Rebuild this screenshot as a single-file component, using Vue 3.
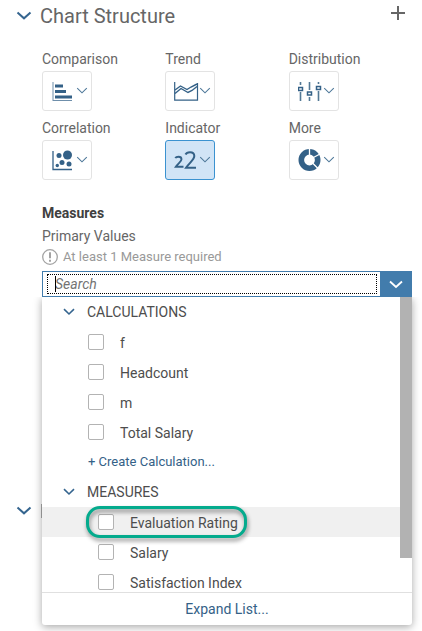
<script setup>
import { ref } from 'vue'

const chartTypes = [
  { label: 'Comparison', icon: 'bars' },
  { label: 'Trend', icon: 'trend' },
  { label: 'Distribution', icon: 'box' },
  { label: 'Correlation', icon: 'scatter' },
  { label: 'Indicator', icon: 'numeric' },
  { label: 'More', icon: 'donut' }
]
const selectedType = ref('Indicator')
const query = ref('')
const groups = ref([
  {
    title: 'CALCULATIONS',
    nested: false,
    create: true,
    items: [
      { name: 'f', checked: false },
      { name: 'Headcount', checked: false },
      { name: 'm', checked: false },
      { name: 'Total Salary', checked: false }
    ]
  },
  {
    title: 'MEASURES',
    nested: true,
    create: false,
    items: [
      { name: 'Evaluation Rating', checked: false, highlighted: true },
      { name: 'Salary', checked: false },
      { name: 'Satisfaction Index', checked: false }
    ]
  }
])
</script>

<template>
  <main class="panel">
    <header class="panel-head">
      <button class="plain toggle" type="button" aria-label="Collapse Chart Structure">
        <svg width="16" height="10" viewBox="0 0 16 10"><path d="M1.5 1.5 8 7.3 14.5 1.5" fill="none" stroke="#35658f" stroke-width="2" /></svg>
      </button>
      <h1>Chart Structure</h1>
      <button class="plain add" type="button" aria-label="Add">
        <svg width="14" height="14" viewBox="0 0 14 14"><path d="M7 0V14M0 7H14" stroke="#666" stroke-width="2" /></svg>
      </button>
    </header>

    <section class="types">
      <div v-for="t in chartTypes" :key="t.label" class="type">
        <span :id="'type-' + t.icon" class="type-label">{{ t.label }}</span>
        <button
          type="button"
          class="type-button"
          :class="{ selected: t.label === selectedType }"
          :aria-labelledby="'type-' + t.icon"
          @click="selectedType = t.label"
        >
          <svg class="type-icon" width="25" height="24" viewBox="0 0 25 24" fill="none" stroke="#346187">
            <template v-if="t.icon === 'bars'">
              <path d="M2 3V22" stroke="#6f8fab" />
              <path d="M4 7H12M4 12.5H15M4 18H21" stroke-width="3" />
              <path d="M2 21.5H21" stroke="#6f8fab" />
            </template>
            <template v-else-if="t.icon === 'trend'">
              <path d="M.7 3V21.2H23.5V4" stroke-width="1.2" />
              <path d="M1 11 6.500 7 13 10.500 17 8 23 5M1 14.500 7 9.5 14 13.5 18 11.500 23 7.500" stroke-width="1.4" />
            </template>
            <template v-else-if="t.icon === 'box'">
              <path d="M2.5 3V6M2.5 13V22M11.5 3V11M11.500 18V22M20.500 3V5M20.500 12V22" stroke-width="1.6" stroke="#527895" />
              <path d="M.500 8.500H4.500V11.500H.500ZM9.500 13H13.500V16H9.500ZM18.500 7.500H22.500V10.500H18.500Z" stroke-width="1.500" />
            </template>
            <template v-else-if="t.icon === 'scatter'">
              <path d="M2 3V21.500H21" stroke-width="1.300" />
              <g fill="#346187" stroke="none">
                <circle cx="8" cy="7.500" r="2.500" />
                <circle cx="16.500" cy="7" r="4.500" />
                <circle cx="11" cy="14.500" r="2.500" />
                <circle cx="18" cy="16" r="2.500" />
                <circle cx="6.300" cy="17.500" r="1.700" />
              </g>
            </template>
            <template v-else-if="t.icon === 'numeric'">
              <path d="M1.300 10.200Q2 8.700 4.500 8.700 7.500 8.700 7.500 11.200C7.500 13.500 4.500 15 1.800 18.800H9.500" stroke-width="1.900" />
              <path d="M11.500 6.500Q12.500 4.200 16 4.200 20.300 4.200 20.300 8C20.300 11.800 15.500 14.500 12 19.800H22" stroke-width="2" />
            </template>
            <template v-else>
              <circle cx="11.500" cy="12" r="8.200" stroke-width="5.600" />
              <path d="M11.500 0V9M14.500 10 22 6M14.500 15 20 20.500" stroke="#fff" stroke-width="1.300" />
            </template>
          </svg>
          <svg width="12" height="8" viewBox="0 0 12 8"><path d="M1.200 1.200 6 5.800 10.800 1.200" fill="none" stroke="#4e7899" stroke-width="1.100" /></svg>
        </button>
      </div>
    </section>

    <section class="measures">
      <h2>Measures</h2>
      <label class="field-label" for="measure-search">Primary Values</label>
      <p class="hint">
        <svg width="16" height="16" viewBox="0 0 16 16"><circle cx="8" cy="8" r="7.300" fill="none" stroke="#a3a3a3" stroke-width="1.300" /><path d="M8 3.300V9.300M8 10.800V12.700" stroke="#999" stroke-width="1.800" /></svg>
        At least 1 Measure required
      </p>
      <div class="combo">
        <div class="search">
          <input id="measure-search" v-model="query" type="text" placeholder="Search" autocomplete="off" />
          <i class="caret"></i>
        </div>
        <button class="plain open" type="button" aria-label="Close list">
          <svg width="14" height="9" viewBox="0 0 14 9"><path d="M1 1.500 7 7 13 1.500" fill="none" stroke="#fff" stroke-width="1.800" /></svg>
        </button>

        <div class="popup">
          <div class="list">
            <div v-for="g in groups" :key="g.title" class="group" :class="{ nested: g.nested }">
              <button class="plain group-head" type="button">
                <svg width="12" height="8" viewBox="0 0 12 8"><path d="M1 1.200 6 6 11 1.200" fill="none" stroke="#35658f" stroke-width="1.600" /></svg>
                {{ g.title }}
              </button>
              <label v-for="i in g.items" :key="i.name" class="item" :class="{ hovered: i.highlighted }">
                <input v-model="i.checked" type="checkbox" />
                <span>{{ i.name }}</span>
                <i v-if="i.highlighted" class="ring"></i>
              </label>
              <button v-if="g.create" class="plain create" type="button">+ Create Calculation...</button>
            </div>
            <div class="scrollbar"></div>
          </div>
          <button class="plain expand" type="button">Expand List...</button>
        </div>
      </div>
    </section>

    <section class="next-section">
      <button class="plain toggle" type="button" aria-label="Collapse section">
        <svg width="16" height="10" viewBox="0 0 16 10"><path d="M1.500 1.500 8 7.300 14.500 1.500" fill="none" stroke="#35658f" stroke-width="2" /></svg>
      </button>
      <span class="divider"></span>
    </section>
  </main>
</template>

<style>
body {
  margin: 0;
  background: #fff;
}
</style>

<style scoped>
.panel {
  box-sizing: border-box;
  min-height: 100vh;
  padding: 0 10px 0 16px;
  color: #666;
  font-family: Roboto, "Liberation Sans", Arial, sans-serif;
  font-size: 14px;
  line-height: 20px;
}
.panel svg {
  display: block;
  flex: none;
}
.panel button,
.panel input {
  font: inherit;
  margin: 0;
}
.plain {
  padding: 0;
  border: 0;
  background: none;
  color: inherit;
}
.panel-head {
  display: flex;
  align-items: center;
  height: 32px;
}
.toggle {
  width: 24px;
}
h1 {
  flex: 1;
  margin: 0;
  font-size: 20px;
  font-weight: 400;
  line-height: 24px;
}
.add {
  padding: 0 7px 6px 0;
}
.types {
  display: grid;
  grid-template-columns: repeat(3, 1fr);
  row-gap: 7px;
  padding: 17px 0 0 26px;
}
.type-label {
  display: block;
  height: 22px;
  line-height: 20px;
}
.type-button {
  display: flex;
  align-items: center;
  width: 50px;
  height: 40px;
  padding: 0 0 0 8px;
  border: 1px solid #e3e3e3;
  border-radius: 3px;
  background: #fff;
}
.type-button.selected {
  border-color: #3b92d0;
  background: #d1e4f6;
}
.measures {
  padding-left: 26px;
}
h2 {
  margin: 23px 0 3px;
  color: #404040;
  font-size: 14px;
  line-height: 20px;
}
.field-label {
  display: block;
}
.hint {
  display: flex;
  align-items: center;
  gap: 5px;
  margin: 1px 0 4px;
  color: #999;
  font-size: 13px;
}
.combo {
  position: relative;
  display: flex;
  height: 26px;
}
.search {
  position: relative;
  flex: 1;
  box-sizing: border-box;
  padding: 2px 3px 2px 4px;
  border: 1px solid #427cac;
  border-right: 0;
}
.search input {
  box-sizing: border-box;
  display: block;
  width: 100%;
  height: 20px;
  padding: 0 7px;
  border: 1px dotted #000;
  outline: 0;
  color: #333;
}
.search input::placeholder {
  color: #737373;
  font-style: italic;
  opacity: 1;
}
.caret {
  position: absolute;
  top: 4px;
  left: 12px;
  width: 1px;
  height: 16px;
  background: #000;
}
.open {
  display: grid;
  place-items: center;
  width: 32px;
  background: #427cac;
}
.popup {
  position: absolute;
  z-index: 2;
  top: 100%;
  left: 0;
  right: 0;
  border-radius: 0 0 3px 3px;
  background: #fff;
  box-shadow: 0 2px 8px rgba(0, 0, 0, 0.35);
  clip-path: inset(0 -12px -12px -12px);
  color: #4d4d4d;
}
.list {
  position: relative;
  height: 295px;
  overflow: hidden;
}
.group-head {
  display: flex;
  align-items: center;
  gap: 12px;
  width: 100%;
  height: 30px;
  padding-left: 21px;
}
.item {
  position: relative;
  display: flex;
  align-items: center;
  gap: 16px;
  height: 30px;
  padding-left: 46px;
}
.nested .item {
  padding-left: 56px;
}
.item span {
  padding-top: 2px;
}
.item input {
  appearance: none;
  box-sizing: border-box;
  width: 16px;
  height: 16px;
  border: 1px solid #b3b3b3;
  border-radius: 2px;
  background: #fff;
}
.item.hovered {
  background: #f0f0f0;
}
.ring {
  position: absolute;
  z-index: 1;
  top: -1px;
  left: 44px;
  box-sizing: border-box;
  width: 161px;
  height: 32px;
  border: 3px solid #04ab8d;
  border-radius: 14px;
  filter: drop-shadow(1px 3px 2px rgba(0, 0, 0, 0.45));
}
.create {
  display: block;
  height: 30px;
  padding-left: 46px;
  color: #346187;
}
.panel .create {
  font-size: 13px;
}
.scrollbar {
  position: absolute;
  top: 0;
  right: 0;
  width: 12px;
  height: 261px;
  background: #b2b2b2;
}
.expand {
  display: block;
  width: 100%;
  height: 33px;
  border-top: 1px solid #e0e0e0;
  color: #346187;
}
.next-section {
  display: flex;
  align-items: center;
  margin-top: 207px;
}
.divider {
  width: 1px;
  height: 14px;
  margin-left: 1px;
  background: #aaa;
}
</style>
